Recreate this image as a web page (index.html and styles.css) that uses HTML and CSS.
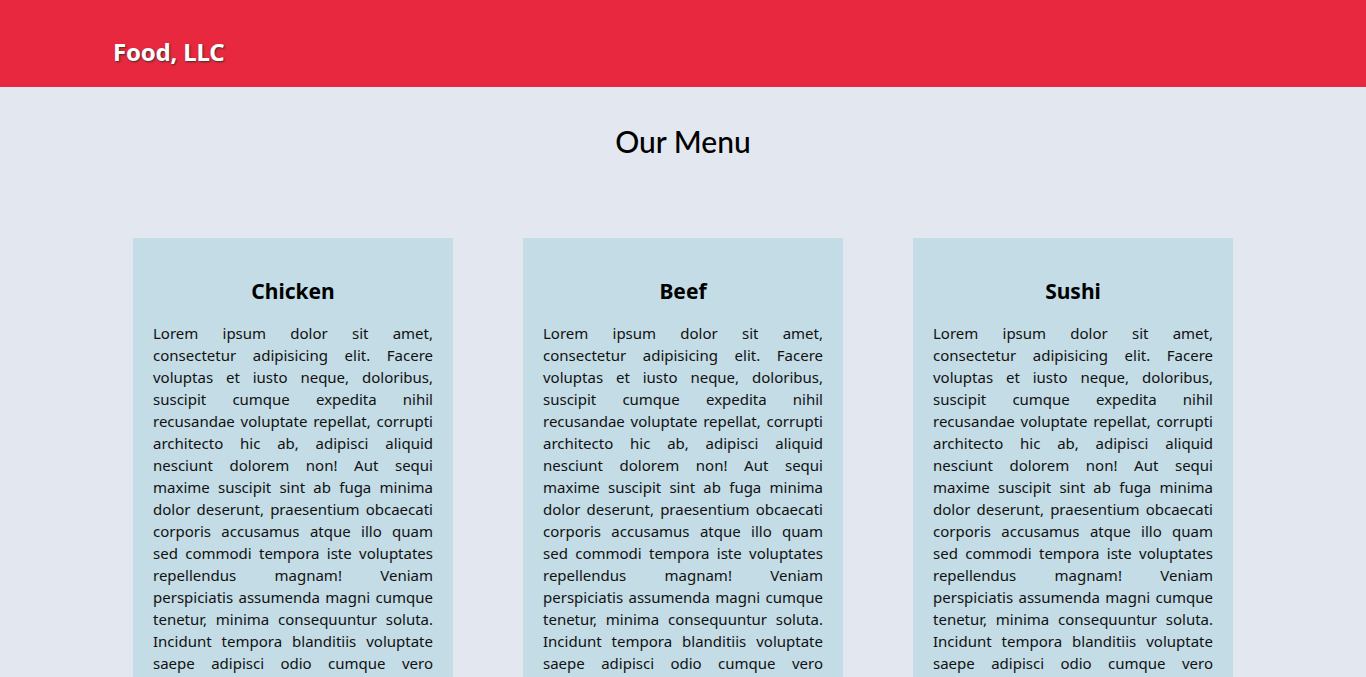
FILE: index.html
```html
<!DOCTYPE html>
<html lang="en">
<head>
<meta charset="utf-8">
<title>Food, LLC</title>
<link rel="stylesheet" href="styles.css">
</head>
<body>
<header class="site-header">
  <div class="header-inner">
    <h1 class="brand">Food, LLC</h1>
  </div>
</header>
<main class="menu">
  <h2 class="menu-title">Our Menu</h2>
  <div class="menu-grid">
    <section class="menu-card">
      <h3 class="card-title">Chicken</h3>
      <p class="card-text">Lorem ipsum dolor sit amet, consectetur adipisicing elit. Facere voluptas et iusto neque, doloribus, suscipit cumque expedita nihil recusandae voluptate repellat, corrupti architecto hic ab, adipisci aliquid nesciunt dolorem non! Aut sequi maxime suscipit sint ab fuga minima dolor deserunt, praesentium obcaecati corporis accusamus atque illo quam sed commodi tempora iste voluptates repellendus magnam! Veniam perspiciatis assumenda magni cumque tenetur, minima consequuntur soluta. Incidunt tempora blanditiis voluptate saepe adipisci odio cumque vero dolores, quibusdam eius ipsam accusantium.</p>
    </section>
    <section class="menu-card">
      <h3 class="card-title">Beef</h3>
      <p class="card-text">Lorem ipsum dolor sit amet, consectetur adipisicing elit. Facere voluptas et iusto neque, doloribus, suscipit cumque expedita nihil recusandae voluptate repellat, corrupti architecto hic ab, adipisci aliquid nesciunt dolorem non! Aut sequi maxime suscipit sint ab fuga minima dolor deserunt, praesentium obcaecati corporis accusamus atque illo quam sed commodi tempora iste voluptates repellendus magnam! Veniam perspiciatis assumenda magni cumque tenetur, minima consequuntur soluta. Incidunt tempora blanditiis voluptate saepe adipisci odio cumque vero dolores, quibusdam eius ipsam accusantium.</p>
    </section>
    <section class="menu-card">
      <h3 class="card-title">Sushi</h3>
      <p class="card-text">Lorem ipsum dolor sit amet, consectetur adipisicing elit. Facere voluptas et iusto neque, doloribus, suscipit cumque expedita nihil recusandae voluptate repellat, corrupti architecto hic ab, adipisci aliquid nesciunt dolorem non! Aut sequi maxime suscipit sint ab fuga minima dolor deserunt, praesentium obcaecati corporis accusamus atque illo quam sed commodi tempora iste voluptates repellendus magnam! Veniam perspiciatis assumenda magni cumque tenetur, minima consequuntur soluta. Incidunt tempora blanditiis voluptate saepe adipisci odio cumque vero dolores, quibusdam eius ipsam accusantium.</p>
    </section>
  </div>
</main>
</body>
</html>
```
FILE: styles.css
```css
* { box-sizing: border-box; }
body {
  margin: 0;
  background: #e3e8f0;
  font-family: "Noto Sans", "Open Sans", sans-serif;
  color: #000;
}
.site-header {
  background: #e8283e;
  height: 87px;
}
.header-inner {
  width: 1140px;
  margin: 0 auto;
  padding-top: 35px;
}
.brand {
  margin: 0;
  color: #fff;
  font-size: 24px;
  line-height: 34px;
  font-weight: 700;
  text-shadow: 1px 1px 2px #333;
  letter-spacing: -0.2px;
  transform: translateY(0);
}
.menu {
  width: 1100px;
  margin: 0 auto;
}
.menu-title {
  margin: 0;
  padding-top: 36px;
  text-align: center;
  font-family: "Lato", "Open Sans", sans-serif;
  font-weight: 500;
  font-size: 30px;
  line-height: 36px;
}
.menu-grid {
  margin-top: 79px;
  display: grid;
  grid-template-columns: repeat(3, 320px);
  justify-content: space-between;
}
.menu-card {
  background: #c3dce5;
  padding: 38px 20px 20px;
}
.card-title {
  margin: 0 0 16px;
  text-align: center;
  font-size: 21px;
  font-weight: 700;
  line-height: 30px;
}
.card-text {
  margin: 0;
  font-size: 15px;
  line-height: 22px;
  text-align: justify;
  color: #111;
}
```
